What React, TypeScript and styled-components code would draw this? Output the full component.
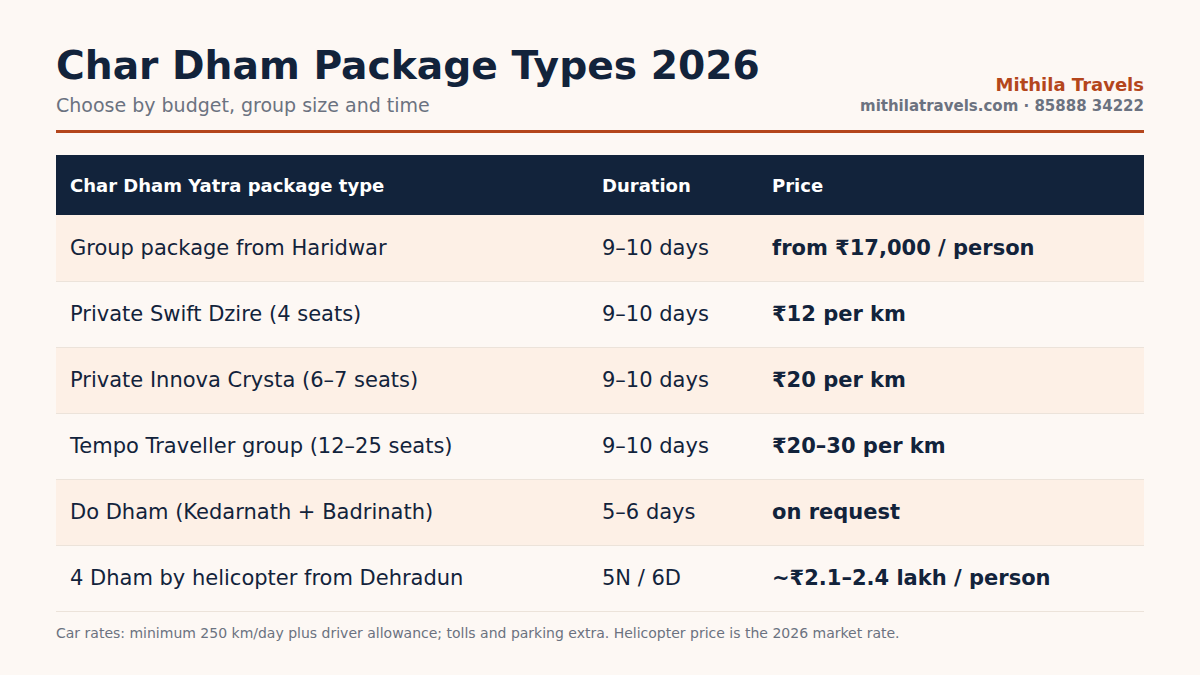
import React from "react";
import styled, { createGlobalStyle } from "styled-components";

const Global = createGlobalStyle`
  html, body { margin: 0; padding: 0; background: #fdf8f4; }
  body { font-family: "DejaVu Sans", Verdana, sans-serif; }
`;

const Page = styled.div`
  width: 1200px;
  height: 675px;
  box-sizing: border-box;
  padding: 41px 56px 0 56px;
  background: #fdf8f4;
  color: #12233b;
`;

const Header = styled.header`
  display: flex;
  justify-content: space-between;
  align-items: flex-end;
  padding-bottom: 13px;
  border-bottom: 3px solid #b4461c;
`;

const TitleBlock = styled.div`
  display: flex;
  flex-direction: column;
`;

const Title = styled.h1`
  margin: 0;
  font-size: 39.2px;
  line-height: 50px;
  font-weight: 700;
  color: #12233b;
`;

const Subtitle = styled.div`
  margin-top: 2px;
  font-size: 19px;
  line-height: 24px;
  color: #6b7280;
`;

const Brand = styled.div`
  display: flex;
  flex-direction: column;
  align-items: flex-end;
  padding-bottom: 1px;
`;

const BrandName = styled.div`
  font-size: 18px;
  line-height: 22px;
  font-weight: 700;
  color: #b4461c;
`;

const BrandContact = styled.div`
  font-size: 15px;
  line-height: 20px;
  font-weight: 700;
  color: #6b7280;
`;

const Table = styled.table`
  width: 100%;
  margin-top: 22px;
  border-collapse: collapse;
  table-layout: fixed;
`;

const HeadCell = styled.th<{ $w?: number }>`
  ${(p) => (p.$w ? `width: ${p.$w}px;` : "")}
  height: 60px;
  padding: 0 14px;
  box-sizing: border-box;
  background: #12233b;
  color: #ffffff;
  font-size: 18px;
  font-weight: 700;
  text-align: left;
`;

const Row = styled.tr<{ $alt: boolean }>`
  background: ${(p) => (p.$alt ? "#fdf0e6" : "#fdf8f4")};
  border-bottom: 1px solid #ece3da;
`;

const Cell = styled.td<{ $strong?: boolean }>`
  height: 66px;
  padding: 0 14px;
  box-sizing: border-box;
  font-size: 21px;
  font-weight: ${(p) => (p.$strong ? 700 : 400)};
  color: #12233b;
`;

const Note = styled.p`
  margin: 12px 0 0 0;
  font-size: 14px;
  line-height: 18px;
  color: #6b7280;
`;

const rows = [
  ["Group package from Haridwar", "9–10 days", "from ₹17,000 / person"],
  ["Private Swift Dzire (4 seats)", "9–10 days", "₹12 per km"],
  ["Private Innova Crysta (6–7 seats)", "9–10 days", "₹20 per km"],
  ["Tempo Traveller group (12–25 seats)", "9–10 days", "₹20–30 per km"],
  ["Do Dham (Kedarnath + Badrinath)", "5–6 days", "on request"],
  ["4 Dham by helicopter from Dehradun", "5N / 6D", "~₹2.1–2.4 lakh / person"],
];

export default function App() {
  return (
    <>
      <Global />
      <Page>
        <Header>
          <TitleBlock>
            <Title>Char Dham Package Types 2026</Title>
            <Subtitle>Choose by budget, group size and time</Subtitle>
          </TitleBlock>
          <Brand>
            <BrandName>Mithila Travels</BrandName>
            <BrandContact>mithilatravels.com · 85888 34222</BrandContact>
          </Brand>
        </Header>
        <Table>
          <thead>
            <tr>
              <HeadCell $w={532}>Char Dham Yatra package type</HeadCell>
              <HeadCell $w={170}>Duration</HeadCell>
              <HeadCell>Price</HeadCell>
            </tr>
          </thead>
          <tbody>
            {rows.map((r, i) => (
              <Row key={i} $alt={i % 2 === 0}>
                <Cell>{r[0]}</Cell>
                <Cell>{r[1]}</Cell>
                <Cell $strong>{r[2]}</Cell>
              </Row>
            ))}
          </tbody>
        </Table>
        <Note>
          Car rates: minimum 250 km/day plus driver allowance; tolls and parking extra. Helicopter price is the 2026 market rate.
        </Note>
      </Page>
    </>
  );
}
